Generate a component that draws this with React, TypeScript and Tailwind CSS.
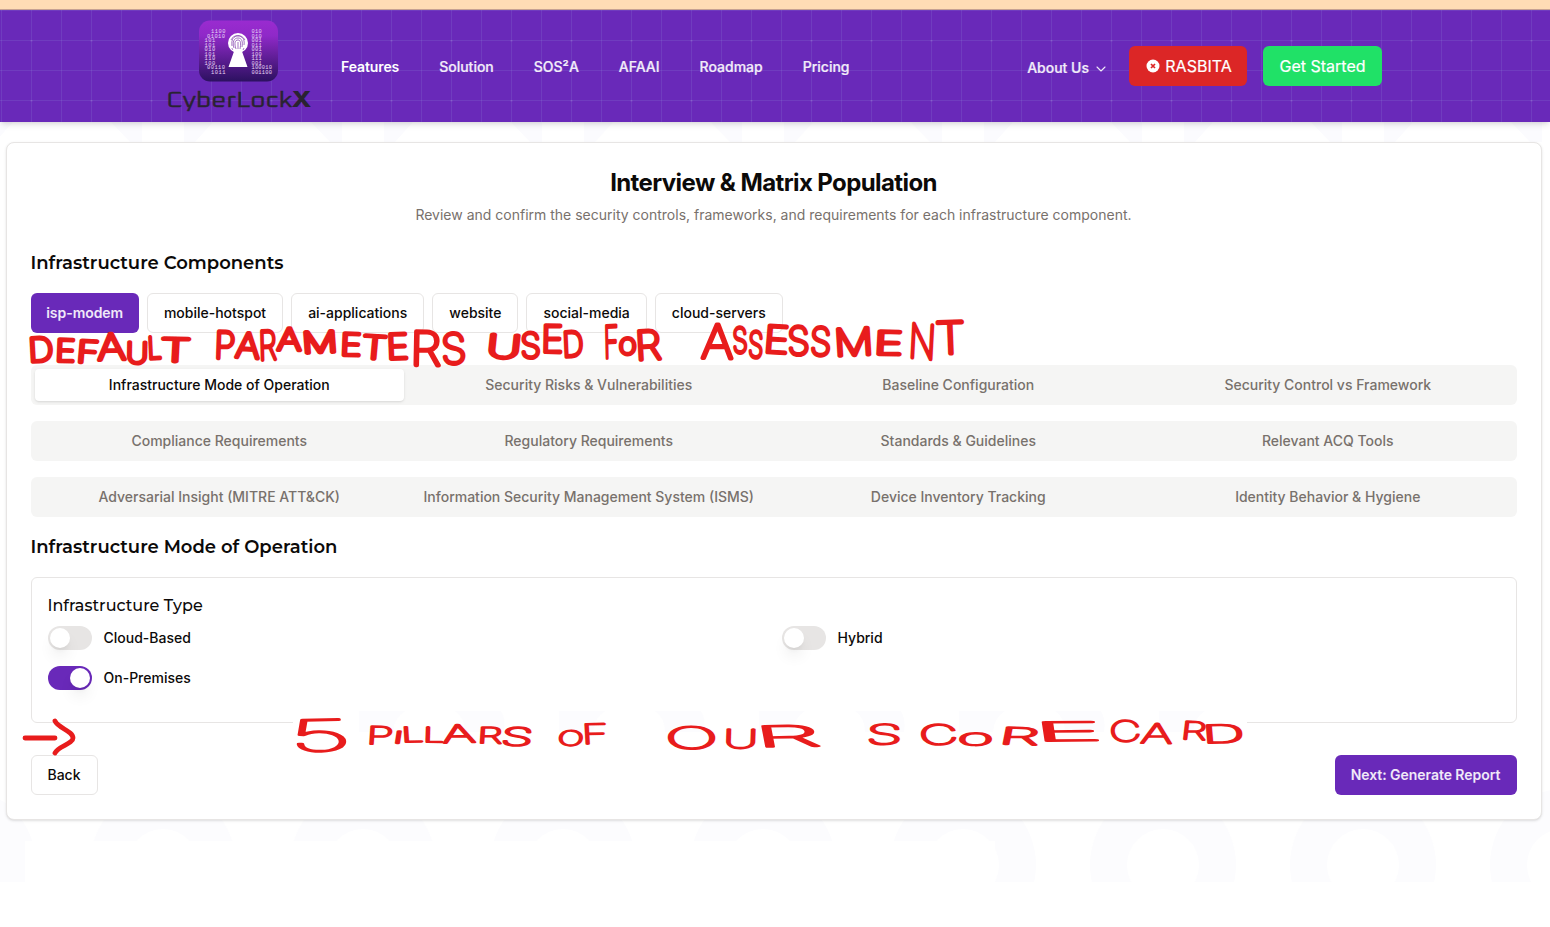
import React from "react";
import { ChevronDown } from "lucide-react";

const NAV = ["Features", "Solution", "SOS²A", "AFAAI", "Roadmap", "Pricing"];
const COMPONENTS = ["isp-modem", "mobile-hotspot", "ai-applications", "website", "social-media", "cloud-servers"];
const TAB_ROWS = [
  ["Infrastructure Mode of Operation", "Security Risks & Vulnerabilities", "Baseline Configuration", "Security Control vs Framework"],
  ["Compliance Requirements", "Regulatory Requirements", "Standards & Guidelines", "Relevant ACQ Tools"],
  ["Adversarial Insight (MITRE ATT&CK)", "Information Security Management System (ISMS)", "Device Inventory Tracking", "Identity Behavior & Hygiene"],
];

// Each letter of a handwritten note: character, left, right, top, bottom.
type Letter = [string, number, number, number, number];
const NOTE_TOP: Letter[][] = [
  [["D", 29, 54, 336, 364], ["E", 55, 75, 337, 363], ["F", 76, 98, 338, 364], ["A", 98, 126, 332, 362], ["U", 126, 148, 340, 365], ["L", 148, 162, 335, 361], ["T", 160, 190, 336, 363]],
  [["P", 214, 235, 329, 360], ["A", 235, 259, 330, 359], ["R", 259, 277, 329, 362], ["A", 277, 301, 326, 352], ["M", 303, 338, 330, 355], ["E", 340, 361, 331, 357], ["T", 361, 386, 333, 360], ["E", 387, 409, 332, 361], ["R", 410, 441, 329, 367], ["S", 442, 467, 332, 366]],
  [["U", 486, 520, 332, 359], ["S", 521, 541, 331, 360], ["E", 541, 563, 323, 354], ["D", 563, 584, 330, 359]],
  [["F", 604, 619, 324, 360], ["O", 619, 636, 336, 356], ["R", 636, 662, 329, 362]],
  [["A", 701, 733, 322, 360], ["S", 733, 748, 326, 355], ["S", 748, 763, 329, 359], ["E", 763, 788, 323, 354], ["S", 788, 810, 325, 357], ["S", 810, 831, 325, 357], ["M", 835, 874, 327, 358], ["E", 874, 902, 329, 356], ["N", 908, 935, 321, 359], ["T", 936, 966, 320, 356]],
];
const NOTE_BOTTOM: Letter[][] = [
  [["5", 291, 353, 719, 753]],
  [["P", 366, 393, 725, 745], ["I", 393, 402, 730, 744], ["L", 402, 424, 726, 743], ["L", 423, 444, 726, 743], ["A", 443, 476, 724, 744], ["R", 477, 502, 726, 744], ["S", 500, 532, 726, 746]],
  [["O", 557, 583, 729, 746], ["F", 582, 609, 723, 745]],
  [["O", 666, 719, 726, 750], ["U", 723, 758, 728, 749], ["R", 757, 822, 725, 748]],
  [["S", 866, 902, 723, 745], ["C", 920, 959, 724, 746], ["O", 958, 992, 732, 746], ["R", 998, 1038, 726, 745], ["E", 1036, 1103, 721, 742]],
  [["C", 1110, 1142, 720, 743], ["A", 1140, 1172, 722, 744], ["R", 1180, 1206, 720, 740], ["D", 1203, 1245, 724, 744]],
];

function Note({ words, stroke }: { words: Letter[][]; stroke: number }) {
  return (
    <g fill="#e81c1c" stroke="#e81c1c" strokeWidth={stroke} strokeLinejoin="round" strokeLinecap="round" fontFamily="Inter, sans-serif" fontWeight={100}>
      {words.map((word, i) => (
        <text key={i}>
          {word.map(([c, l, r, t, b], j) => (
            <tspan key={j} x={l} y={b - stroke / 2} rotate={[-3, 2, 4, -2, 1][(i + j) % 5]} fontSize={(b - t - stroke) / 0.73} textLength={r - l} lengthAdjust="spacingAndGlyphs">
              {c}
            </tspan>
          ))}
        </text>
      ))}
    </g>
  );
}

function Ink() {
  const zeros = [359, 559, 759, 959, 1159];
  return (
    <svg className="pointer-events-none absolute left-0 top-0" width="1550" height="927" aria-hidden="true">
      <rect x="293" y="711" width="954" height="21" fill="#fff" />
      {zeros.map((x) => (
        <path key={x} d={`M${x} 711H${x + 46}Q${x + 35} 718 ${x + 34} 732H${x}ZM${x + 96} 711H${x + 142}Q${x + 147} 720 ${x + 145} 732H${x + 106}Q${x + 106} 718 ${x + 96} 711Z`} fill="#fcfcfe" clipPath="url(#strip)" />
      ))}
      <clipPath id="strip"><rect x="293" y="711" width="954" height="21" /></clipPath>
      <Note words={NOTE_TOP} stroke={4.1} />
      <Note words={NOTE_BOTTOM} stroke={2} />
      <path d="M25 738H55M55 721C58 728 73 731 73 738C73 744 58 746 55 753" fill="none" stroke="#e81c1c" strokeWidth="4.8" strokeLinecap="round" strokeLinejoin="round" />
    </svg>
  );
}

function Watermark() {
  const xs = [-237, -37, 163, 363, 563, 763, 963, 1163, 1363, 1563];
  return (
    <svg className="pointer-events-none absolute left-0 top-0" width="1550" height="927" aria-hidden="true">
      <clipPath id="page"><rect x="0" y="122" width="1550" height="760" /></clipPath>
      <g clipPath="url(#page)">
        {xs.map((x) => (
          <g key={x}>
            <path d={`M${x + 21} 122H${x + 50}L${x + 32} 142H${x + 21}ZM${x + 148} 122H${x + 179}V142H${x + 167}Z`} fill="#fbfbfe" />
            <ellipse cx={x} cy="865" rx="73" ry="76" fill="#fcfcfe" />
            <ellipse cx={x} cy="865" rx="36" ry="36" fill="#fff" />
          </g>
        ))}
        <rect x="25" y="841" width="970" height="41" fill="#fff" />
      </g>
    </svg>
  );
}

function Logo() {
  const left: [number, string][] = [[211, "1100"], [207, "01010"], [204.5, "101"], [204.5, "101"], [204.5, "010"], [204.5, "101"], [204.5, "110"], [204.5, "100"], [207, "00110"], [211, "1011"]];
  const right = ["010", "010", "001", "011", "001", "100", "111", "001", "100010", "001100"];
  return (
    <svg width="144" height="94" viewBox="167 20 144 94" className="block shrink-0">
      <defs>
        <linearGradient id="badge" x1="0" y1="0" x2="0" y2="1">
          <stop offset="0" stopColor="#9a2bd0" />
          <stop offset="0.25" stopColor="#8f29c8" />
          <stop offset="1" stopColor="#2c1160" />
        </linearGradient>
      </defs>
      <rect x="199" y="20.500" width="79" height="61" rx="11" fill="url(#badge)" />
      <g fill="#e6d6f5" fontFamily="Liberation Mono, monospace" fontSize="5.4">
        {left.map(([x, s], i) => (
          <text key={i} x={x} y={33 + i * 4.55} textLength={s.length * 3.6}>{s}</text>
        ))}
        {right.map((s, i) => (
          <text key={i} x="251.500" y={33 + i * 4.55} textLength={s.length * 3.4}>{s}</text>
        ))}
      </g>
      <circle cx="238" cy="43" r="10" fill="#fff" />
      <path d="M234.500 50h7l6 17h-19z" fill="#fff" />
      <g fill="none" stroke="#7a35a8" strokeWidth="0.7">
        <path d="M232 46c-1-7 2-10 6-10s7 3 6 9M234 48c-2-6 0-10 4-10s5 4 4 9M236 49c-2-6-1-9 2-9s3 4 2 9M238 42v7M231 40c2-5 10-7 14 0M233 50c0 0-1-1-1-2M244 48l-1 2" />
      </g>
      <text x="166.500" y="106.800" fill="#292331" stroke="#292331" strokeWidth="0.3" fontFamily="Oxanium, Orbitron, 'Exo 2', Inter, sans-serif" fontSize="21.5" textLength="126" lengthAdjust="spacingAndGlyphs">CyberLock</text>
      <text x="291.500" y="106.800" fill="#292331" fontFamily="Inter, sans-serif" fontSize="21.5" fontWeight="800" textLength="20" lengthAdjust="spacingAndGlyphs">X</text>
    </svg>
  );
}

function Header() {
  return (
    <header className="relative h-28 bg-[#6929b9] shadow-md">
      <svg className="absolute inset-0" width="1550" height="112" aria-hidden="true">
        <defs>
          <pattern id="grid" x="1" y="0" width="30" height="30" patternUnits="userSpaceOnUse">
            <path d="M0.500 0V30M0 0.500H30" stroke="#a0b8e8" strokeOpacity="0.13" />
          </pattern>
          <pattern id="dots" x="30" y="30" width="60" height="60" patternUnits="userSpaceOnUse">
            <rect x="0.500" y="0" width="2" height="1.500" fill="#fff" fillOpacity="0.1" />
          </pattern>
        </defs>
        <rect width="1550" height="112" fill="url(#grid)" />
        <rect width="1550" height="112" fill="url(#dots)" />
      </svg>
      <div className="relative flex h-full items-start pl-[167px] pr-[168px]">
        <div className="pt-[10px]"><Logo /></div>
        <nav className="ml-[30px] flex gap-10 pt-[47px] text-sm leading-5 text-white/90">
          {NAV.map((n, i) => (
            <a key={n} className={i === 0 ? "font-semibold tracking-[-0.1px] text-white" : "font-medium [-webkit-text-stroke:0.2px]"}>{n}</a>
          ))}
        </nav>
        <div className="ml-auto flex gap-4 pt-9">
          <div className="mr-1 flex h-11 items-center gap-1 text-sm font-medium text-white/90 [-webkit-text-stroke:0.2px]">
            About Us <ChevronDown size={16} className="mt-px" strokeWidth={1.6} />
          </div>
          <button className="flex h-10 w-[118px] items-center justify-center gap-[5px] rounded-md bg-[#dc2626] pl-0.5 text-base text-white [-webkit-text-stroke:0.2px]">
            <svg width="14" height="14" viewBox="0 0 14 14">
              <circle cx="7" cy="7" r="6.500" fill="#fff" />
              <path d="M5 5l4 4M9 5l-4 4" stroke="#dc2626" strokeWidth="1.700" />
            </svg>
            RASBITA
          </button>
          <button className="h-10 w-[119px] rounded-md bg-[#20e167] text-base text-white [-webkit-text-stroke:0.2px]">Get Started</button>
        </div>
      </div>
    </header>
  );
}

function Toggle({ label, on = false }: { label: string; on?: boolean }) {
  return (
    <label className="flex h-6 items-center gap-3 text-sm font-medium">
      <span className={on ? "flex h-6 w-11 items-center justify-end rounded-full bg-[#6929b9] p-0.5" : "flex h-6 w-11 items-center rounded-full bg-[#e7e5e4] p-0.5"}>
        <span className="h-5 w-5 rounded-full bg-white shadow-lg" />
      </span>
      {label}
    </label>
  );
}

export default function App() {
  return (
    <div className="relative h-[927px] w-[1550px] overflow-hidden bg-white font-['Inter',sans-serif] text-[#0c0a09]">
      <Watermark />
      <div className="h-[10px] border-b border-[#c7a294] bg-[#ffdcb5]" />
      <Header />
      <main className="relative ml-[5.5px] mt-5 h-[678px] w-[1536px] rounded-lg border border-[#e7e5e4] bg-white px-6 shadow-sm">
        <h1 className="mt-6 text-center text-2xl font-bold leading-8 tracking-[-0.6px]">Interview &amp; Matrix Population</h1>
        <p className="mt-1.5 text-center text-sm leading-5 text-[#78716c]">Review and confirm the security controls, frameworks, and requirements for each infrastructure component.</p>
        <h2 className="mt-6 font-['Montserrat','Inter',sans-serif] text-[18px] font-semibold leading-7">Infrastructure Components</h2>
        <div className="mt-4 flex gap-2">
          {COMPONENTS.map((c, i) => (
            <button key={c} className={i === 0 ? "h-10 w-[108.4px] rounded-md bg-[#6929b9] text-sm font-semibold tracking-[-0.05px] text-white/90" : "h-10 rounded-md border border-[#e7e5e4] bg-white px-4 text-sm font-medium"}>{c}</button>
          ))}
        </div>
        <div className="mt-8 flex flex-col gap-4">
          {TAB_ROWS.map((row, r) => (
            <div key={r} className="grid h-10 grid-cols-4 rounded-md bg-[#f5f5f4] p-1 text-sm font-medium text-[#78716c]">
              {row.map((t, i) => (
                <button key={t} className={r === 0 && i === 0 ? "whitespace-nowrap rounded-sm bg-white text-[#0c0a09] shadow-sm" : "whitespace-nowrap"}>{t}</button>
              ))}
            </div>
          ))}
        </div>
        <h2 className="mt-4 font-['Montserrat','Inter',sans-serif] text-[18px] font-semibold leading-7">Infrastructure Mode of Operation</h2>
        <section className="mt-4 h-[146px] rounded-md border border-[#e7e5e4] px-4 pt-4">
          <h3 className="font-['Montserrat','Inter',sans-serif] text-base font-medium leading-6">Infrastructure Type</h3>
          <div className="mt-2 grid grid-cols-2 gap-x-4 gap-y-4">
            <Toggle label="Cloud-Based" />
            <Toggle label="Hybrid" />
            <Toggle label="On-Premises" on />
          </div>
        </section>
        <div className="mt-8 flex justify-between text-sm font-medium">
          <button className="h-10 w-[67px] rounded-md border border-[#e7e5e4] bg-white">Back</button>
          <button className="h-10 w-[182px] rounded-md bg-[#6929b9] font-semibold tracking-[-0.05px] text-white/90">Next: Generate Report</button>
        </div>
      </main>
      <Ink />
    </div>
  );
}
